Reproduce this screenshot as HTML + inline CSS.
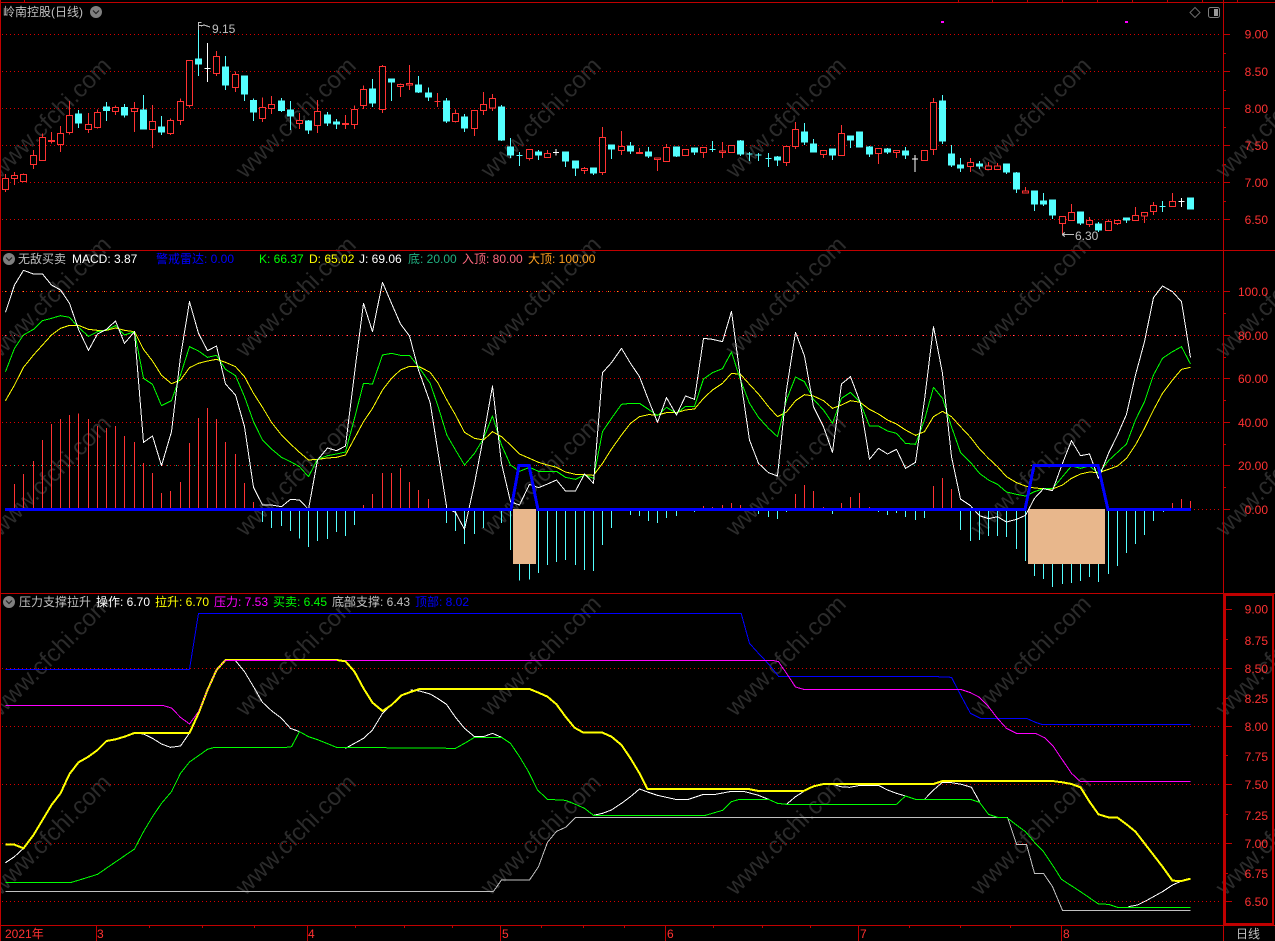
<!DOCTYPE html>
<html><head><meta charset="utf-8"><title>岭南控股</title>
<style>
html,body{margin:0;padding:0;background:#000;width:1275px;height:941px;overflow:hidden}
svg{display:block;position:absolute;left:0;top:0}
text{font-family:"Liberation Sans","Noto Sans CJK SC",sans-serif;font-size:12px;letter-spacing:0}
.wm text{font-size:24px;fill:#2b2b2b;text-anchor:middle;dominant-baseline:central;letter-spacing:0}
.ax text{fill:#ff3232;text-anchor:end}
.c{shape-rendering:crispEdges;fill:none}
.w{stroke-width:3}
</style></head><body>
<svg width="1275" height="941" viewBox="0 0 1275 941" xmlns="http://www.w3.org/2000/svg">
<rect width="1275" height="941" fill="#000"/>
<g class="wm">
<text transform="translate(51,118) rotate(-45)">www.cfchi.com</text><text transform="translate(296,118) rotate(-45)">www.cfchi.com</text><text transform="translate(541,118) rotate(-45)">www.cfchi.com</text><text transform="translate(786,118) rotate(-45)">www.cfchi.com</text><text transform="translate(1031,118) rotate(-45)">www.cfchi.com</text><text transform="translate(1276,118) rotate(-45)">www.cfchi.com</text>
<text transform="translate(51,297) rotate(-45)">www.cfchi.com</text><text transform="translate(296,297) rotate(-45)">www.cfchi.com</text><text transform="translate(541,297) rotate(-45)">www.cfchi.com</text><text transform="translate(786,297) rotate(-45)">www.cfchi.com</text><text transform="translate(1031,297) rotate(-45)">www.cfchi.com</text><text transform="translate(1276,297) rotate(-45)">www.cfchi.com</text>
<text transform="translate(51,476) rotate(-45)">www.cfchi.com</text><text transform="translate(296,476) rotate(-45)">www.cfchi.com</text><text transform="translate(541,476) rotate(-45)">www.cfchi.com</text><text transform="translate(786,476) rotate(-45)">www.cfchi.com</text><text transform="translate(1031,476) rotate(-45)">www.cfchi.com</text><text transform="translate(1276,476) rotate(-45)">www.cfchi.com</text>
<text transform="translate(51,656) rotate(-45)">www.cfchi.com</text><text transform="translate(296,656) rotate(-45)">www.cfchi.com</text><text transform="translate(541,656) rotate(-45)">www.cfchi.com</text><text transform="translate(786,656) rotate(-45)">www.cfchi.com</text><text transform="translate(1031,656) rotate(-45)">www.cfchi.com</text><text transform="translate(1276,656) rotate(-45)">www.cfchi.com</text>
<text transform="translate(51,835) rotate(-45)">www.cfchi.com</text><text transform="translate(296,835) rotate(-45)">www.cfchi.com</text><text transform="translate(541,835) rotate(-45)">www.cfchi.com</text><text transform="translate(786,835) rotate(-45)">www.cfchi.com</text><text transform="translate(1031,835) rotate(-45)">www.cfchi.com</text><text transform="translate(1276,835) rotate(-45)">www.cfchi.com</text>
</g>

<!-- grid -->
<g class="c" stroke="#d80000" stroke-dasharray="1 3">
<path d="M2 34.5H1221M2 71.5H1221M2 108.5H1221M2 145.5H1221M2 182.5H1221M2 219.5H1221"/>
<path d="M2 291.5H1221M2 335.5H1221M2 378.5H1221M2 422.5H1221M2 465.5H1221M1190 509.5H1221"/>
<path d="M2 668.5H1221M2 726.5H1221M2 784.5H1221M2 843.5H1221M2 901.5H1221"/>
</g>
<g class="c" stroke-dasharray="1 8">
<path stroke="#ffa020" d="M5 291.5H1190"/>
<path stroke="#ff6a80" d="M5 335.5H1190"/>
<path stroke="#20b080" d="M5 465.5H1190"/>
</g>

<!-- frame -->
<g class="c" stroke="#c00000">
<path d="M.5 0V941M0 2.5H1275M0 250.5H1275M0 593.5H1275M0 925.5H1275M1223.5 0V941"/>
<path d="M24.5 0V2M958.5 0V2M992.5 0V2M1027.5 0V2M1062.5 0V2M1097.5 0V2M1132.5 0V2M1167.5 0V2M1202.5 0V2M1237.5 0V2"/>
<path d="M1224 34.5h6M1224 71.5h6M1224 108.5h6M1224 145.5h6M1224 182.5h6M1224 219.5h6M1224 53.5h2M1224 90.5h2M1224 127.5h2M1224 164.5h2M1224 201.5h2"/>
<path d="M1224 291.5h6M1224 335.5h6M1224 378.5h6M1224 422.5h6M1224 465.5h6M1224 509.5h6M1224 313.5h2M1224 357.5h2M1224 400.5h2M1224 444.5h2M1224 487.5h2"/>
<path d="M1226 609.5h6M1226 668.5h6M1226 726.5h6M1226 784.5h6M1226 843.5h6M1226 901.5h6M1226 639.5h2M1226 698.5h2M1226 755.5h2M1226 814.5h2M1226 873.5h2"/>
<rect x="1225" y="595" width="48" height="329" stroke-width="2"/>
<path d="M96.5 925V941M307.5 925V941M500.5 925V941M665.5 925V941M858.5 925V941M1061.5 925V941"/>
<path d="M149.5 925v3M202.5 925v3M254.5 925v3M355.5 925v3M404.5 925v3M452.5 925v3M541.5 925v3M583.5 925v3M624.5 925v3M713.5 925v3M762.5 925v3M810.5 925v3M909.5 925v3M960.5 925v3M1010.5 925v3"/>
</g>

<!-- candles -->
<g class="c w" transform="scale(.33333) translate(.5,0)">
<path stroke="#ff3232" d="M16 522V576M43 516V555M70 520V546M100 450V507M127 400V483M154 396V431M181 378V456M208 303V404M265 339V399M292 328V385M346 316V345M403 306V396M457 315V444M511 355V405M541 295V375M568 181V322M649 153V228M706 214V276M787 292V366M814 288V342M898 339V387M952 300V399M1036 345V387M1063 316V387M1090 256V327M1147 195V339M1201 250V291M1228 195V270"/>
<path stroke="#ff3232" fill="#000" d="M7 536h18V568h-18zM34 527h18V536h-18zM61 523h18V545h-18zM91 467h18V494h-18zM118 412h18V482h-18zM145 421h18V424h-18zM172 401h18V433h-18zM199 346h18V397h-18zM256 373h18V389h-18zM283 337h18V383h-18zM337 322h18V334h-18zM394 325h18V334h-18zM448 364h18V388h-18zM502 361h18V401h-18zM532 304h18V361h-18zM559 181h18V317h-18zM640 169h18V220h-18zM697 223h18V263h-18zM778 322h18V356h-18zM805 313h18V326h-18zM889 361h18V371h-18zM943 334h18V377h-18zM1027 370h18V373h-18zM1054 328h18V374h-18zM1081 268h18V317h-18zM1138 199h18V328h-18zM1192 253h18V260h-18zM1219 250h18V255h-18z"/>
<path stroke="#54ffff" d="M235 330V384M319 306V363M373 312V353M430 285V387M484 348V405M595 75V228M676 168V270M733 226V303M760 295V363M844 294V336M871 303V390M925 360V402M982 336V378M1009 357V387M1117 237V321M1174 237V303M1255 228V279M1285 262V303"/>
<path stroke="#54ffff" fill="#54ffff" d="M226 342h18V369h-18zM310 321h18V332h-18zM364 322h18V345h-18zM421 330h18V387h-18zM475 381h18V396h-18zM586 177h18V192h-18zM667 201h18V255h-18zM724 228h18V282h-18zM751 301h18V336h-18zM835 303h18V331h-18zM862 330h18V348h-18zM916 363h18V390h-18zM973 345h18V369h-18zM1000 366h18V372h-18zM1108 267h18V309h-18zM1165 237h18V246h-18zM1246 255h18V276h-18zM1276 279h18V291h-18z"/>
<path stroke="#fff" d="M622 129V246M613 205h18"/>
</g>
<g class="c w" transform="translate(430,50) scale(.33333) translate(.5,0)">
<path stroke="#ff3232" d="M22 129V171M76 178V218M133 181V258M160 126V195M187 132V183M298 298V332M352 300V324M463 351V372M517 231V375M574 243V315M628 294V312M682 324V363M709 282V335M820 291V324M877 276V324M1069 288V348M1096 216V297M1180 301V324M1234 225V317"/>
<path stroke="#ff3232" fill="#000" d="M13 154h18M67 190h18V215h-18zM124 181h18V236h-18zM151 163h18V182h-18zM178 145h18V174h-18zM289 298h18V326h-18zM343 310h18V323h-18zM454 355h18V362h-18zM508 262h18V368h-18zM565 289h18V302h-18zM619 307h18V311h-18zM673 324h18V329h-18zM700 292h18V335h-18zM757 298h18V317h-18zM811 292h18V308h-18zM868 303h18V308h-18zM895 286h18V308h-18zM1060 289h18V338h-18zM1087 238h18V290h-18zM1171 301h18V314h-18zM1225 250h18V317h-18z"/>
<path stroke="#54ffff" d="M49 144V219M103 192V246M214 165V273M241 264V324M268 306V348M325 300V330M406 306V351M436 333V378M490 354V375M544 285V327M601 276V312M655 291V324M739 291V321M793 294V315M847 273V306M931 270V318M958 306V333M985 309V333M1015 309V351M1042 318V348M1123 219V285M1150 267V306M1207 297V330M1261 258V294"/>
<path stroke="#54ffff" fill="#54ffff" d="M40 153h18V213h-18zM94 201h18V234h-18zM205 171h18V270h-18zM232 291h18V315h-18zM259 316h18M316 306h18V315h-18zM397 306h18V333h-18zM427 333h18V354h-18zM481 354h18V369h-18zM535 285h18V297h-18zM592 288h18V303h-18zM646 306h18V318h-18zM730 291h18V318h-18zM784 294h18V306h-18zM838 298h18M922 273h18V312h-18zM949 312h18M976 315h18M1006 325h18M1033 321h18V330h-18zM1114 246h18V276h-18zM1141 282h18V306h-18zM1198 297h18V315h-18zM1252 258h18V270h-18zM1279 246h18V291h-18z"/>
<path stroke="#fff" d="M378 297V316M369 308h18"/>
</g>
<g class="c w" transform="translate(860,0) scale(.33333) translate(.5,0)">
<path stroke="#ff3232" d="M55 445V492M109 451V474M220 294V465M331 474V516M385 486V510M412 489V510M496 561V579M607 650V706M634 612V663M688 651V681M745 658V692M772 660V675M826 621V663M853 636V669M880 606V645M937 579V621"/>
<path stroke="#ff3232" fill="#000" d="M46 445h18V461h-18zM100 451h18V458h-18zM184 451h18V482h-18zM211 307h18V449h-18zM322 488h18V500h-18zM376 498h18V509h-18zM403 498h18V509h-18zM487 573h18V579h-18zM598 650h18V670h-18zM625 637h18V662h-18zM679 661h18V674h-18zM736 665h18V692h-18zM763 661h18V670h-18zM817 647h18V662h-18zM844 638h18V648h-18zM871 616h18V635h-18zM928 604h18V620h-18z"/>
<path stroke="#54ffff" d="M28 438V471M82 444V462M136 441V477M247 285V432M274 435V501M301 474V516M358 483V507M439 492V522M469 516V579M523 573V633M550 579V618M577 600V657M661 636V675M715 666V696M799 654V669M907 603V636"/>
<path stroke="#54ffff" fill="#54ffff" d="M19 441h18V462h-18zM73 447h18V456h-18zM127 453h18V465h-18zM238 303h18V423h-18zM265 462h18V495h-18zM292 495h18V504h-18zM349 492h18V498h-18zM430 492h18V516h-18zM460 519h18V567h-18zM514 573h18V612h-18zM541 603h18V612h-18zM568 600h18V645h-18zM652 636h18V669h-18zM706 672h18V690h-18zM790 654h18V660h-18zM898 619h18M982 594h18V627h-18z"/>
<path stroke="#fff" d="M165 465V516M156 477h18M964 594V621M955 604h18"/>
</g>
<g class="c"><rect x="941" y="21" width="3" height="2" fill="#ff00ff"/><rect x="1125" y="21" width="3" height="2" fill="#ff00ff"/></g>

<!-- annotations -->
<g class="c" stroke="#c0c0c0">
<path d="M198.5 22V30M198.5 22.5h3M198.5 25.5h3M201 26l3-1 3 1 3 1"/>
<path d="M1062 234.5H1074M1062 234.5l3-2M1062 234.5l3 2"/>
</g>
<text x="212" y="33" fill="#c0c0c0">9.15</text>
<text x="1075" y="240" fill="#c0c0c0">6.30</text>

<!-- panel 2: MACD bars -->
<g class="c w" transform="translate(0,250) scale(.33333) translate(.5,0)">
<path stroke="#ff3232" d="M43 775V702M70 775V672M100 775V633M127 775V570M154 775V522M181 775V507M208 775V495M235 775V491M265 775V507M292 775V528M319 775V534M346 775V528M373 775V558M403 775V576M430 775V639M457 775V669M484 775V729M511 775V723M541 775V696M568 775V579M595 775V504M622 775V474M649 775V507M676 775V576M706 775V612M733 775V699M760 775V756M1090 775V765M1117 775V732M1147 775V669M1174 775V669M1201 775V654M1228 775V696M1255 775V720M1285 775V747"/>
<path stroke="#54ffff" d="M787 780V816M814 780V834M844 780V828M871 780V843M898 780V866M925 780V891M952 780V873M982 780V867M1009 780V846M1036 780V858M1063 780V825"/>
</g>
<g class="c w" transform="translate(430,250) scale(.33333) translate(.5,0)">
<path stroke="#54ffff" d="M49 780V819M76 780V843M103 780V882M133 780V852M160 780V834M214 780V819M241 780V900M268 780V992M298 780V989M325 780V969M352 780V945M379 780V936M406 780V930M436 780V945M463 780V960M490 780V963M517 780V885M544 780V834M601 780V795M628 780V798M655 780V813M682 780V819M709 780V804M739 780V798M793 780V786M985 780V792M1015 780V801M1042 780V807M1069 780V786M1207 780V792"/>
<path stroke="#ff3232" d="M820 775V768M847 775V771M877 775V765M904 775V759M931 775V765M1096 775V732M1123 775V705M1150 775V723M1180 775V771M1234 775V759M1261 775V741M1288 775V729"/>
</g>
<g class="c w" transform="translate(860,250) scale(.33333) translate(.5,0)">
<path stroke="#ff3232" d="M28 775V771M220 775V708M247 775V684M274 775V717M937 775V759M964 775V747M991 775V753"/>
<path stroke="#54ffff" d="M55 780V786M82 780V795M109 780V789M136 780V801M166 780V810M193 780V804M301 780V840M331 780V873M358 780V870M385 780V858M412 780V858M439 780V861M469 780V897M496 780V933M523 780V978M550 780V987M577 780V1011M607 780V1002M634 780V999M661 780V993M688 780V981M715 780V996M745 780V972M772 780V948M799 780V909M826 780V882M853 780V855M880 780V813M910 780V786"/>
</g>
<g class="c">
<rect x="513" y="509" width="23" height="55" fill="#e8b78c"/>
<rect x="1028" y="509" width="77" height="55" fill="#e8b78c"/>
</g>

<!-- panel 2: KDJ -->
<g class="c w" transform="translate(0,250) scale(.33333) translate(.5,0)" stroke-linejoin="round">
<polyline stroke="#ffff00" points="16,452 43,405 70,352 100,315 127,285 154,255 181,235 208,226 235,226 265,238 292,241 319,241 346,234 373,241 403,245 430,298 457,333 484,376 514,401 541,390 568,353 595,340 622,333 649,328 676,337 706,350 733,380 760,430 787,472 814,517 844,555 871,582 898,607 925,630 952,628 982,624 1009,622 1036,615 1063,565 1090,515 1117,475 1147,420 1174,385 1201,360 1228,349 1255,349 1290,367 1314,400 1340,450 1366,495 1393,547 1423,565 1450,570 1477,545 1504,560 1531,585 1558,612 1588,625 1615,637 1642,645 1669,652 1696,666 1726,673 1753,674 1780,676 1807,640 1834,597 1864,555 1891,520 1918,500 1945,494 1972,495 1999,488 2029,488 2056,480 2083,477 2110,445 2137,420 2167,400 2194,370 2221,373 2248,403 2275,432 2305,470 2332,500 2359,486 2386,452 2413,434 2440,438 2470,452 2497,475 2524,465 2551,452 2580,457 2608,478 2635,492 2662,510 2689,522 2716,540 2746,556 2773,545 2800,500 2827,484 2854,500 2881,530 2911,562 2938,597 2965,625 2992,650 3019,680 3049,698 3076,708 3103,714 3130,716 3157,717 3187,705 3214,685 3241,672 3268,666 3295,668 3325,658 3352,648 3379,625 3406,585 3433,535 3460,480 3487,430 3517,390 3544,358 3571,352"/>
<polyline stroke="#00ff00" points="16,365 43,295 70,255 100,238 127,212 154,205 181,197 208,202 235,232 265,259 292,245 319,240 346,227 373,255 403,245 430,385 457,403 484,467 514,452 541,375 568,290 595,303 622,322 649,316 676,358 706,377 733,440 760,515 787,570 814,597 844,622 871,635 898,650 925,680 952,628 982,617 1009,612 1036,606 1063,505 1090,400 1117,402 1147,315 1174,310 1201,316 1228,316 1255,350 1290,400 1314,470 1340,555 1366,600 1393,645 1423,610 1450,565 1477,498 1504,585 1531,645 1558,664 1588,652 1615,664 1642,664 1669,664 1696,682 1726,688 1753,675 1780,685 1807,545 1834,505 1864,463 1891,460 1918,460 1945,478 1972,497 1999,472 2029,490 2056,469 2083,469 2110,387 2137,368 2167,356 2194,306 2221,390 2248,460 2275,502 2305,535 2332,560 2359,450 2386,381 2413,395 2440,448 2470,480 2497,520 2524,445 2551,427 2580,457 2608,528 2635,528 2662,543 2689,550 2716,580 2746,583 2773,510 2800,412 2827,445 2854,530 2881,607 2911,637 2938,670 2965,690 2992,703 3019,726 3049,733 3076,738 3103,725 3130,716 3157,716 3187,680 3214,648 3241,655 3268,648 3295,670 3325,632 3352,607 3379,582 3406,510 3433,455 3460,375 3487,325 3517,305 3544,290 3571,342"/>
<polyline stroke="#ffffff" points="16,187 43,105 70,61 100,72 127,72 154,105 181,120 208,160 235,238 265,301 292,252 319,238 346,213 373,280 403,245 430,577 457,558 484,647 514,545 541,320 568,155 595,250 622,302 649,288 676,402 706,435 733,530 760,712 787,765 814,765 844,770 871,748 898,750 925,778 952,630 982,594 1009,602 1036,588 1063,370 1090,160 1117,245 1147,97 1174,160 1201,222 1228,258 1255,360 1290,458 1340,775 1366,787 1393,838 1423,700 1450,560 1477,408 1504,640 1531,755 1558,765 1588,703 1615,713 1642,702 1669,690 1696,723 1726,723 1753,672 1780,700 1807,368 1834,338 1864,295 1891,340 1918,380 1945,450 1972,517 1999,443 2029,495 2056,438 2083,448 2110,265 2137,268 2167,275 2194,184 2221,385 2248,570 2275,640 2305,668 2332,678 2359,420 2386,247 2413,318 2440,470 2470,530 2497,607 2524,402 2551,380 2580,457 2608,628 2635,595 2662,612 2689,598 2716,655 2746,637 2773,450 2800,230 2827,370 2854,620 2881,747 2911,767 2938,797 2965,806 2992,800 3019,816 3049,808 3076,796 3103,745 3130,716 3157,722 3187,640 3214,572 3241,617 3268,612 3295,685 3325,610 3352,555 3379,493 3406,375 3433,275 3460,143 3487,108 3517,125 3544,155 3571,322"/>
</g>
<path class="c" stroke="#0000ff" stroke-width="3" d="M5 509.5H511L519 465.5H529L538 509.5H1025L1034 465.5H1098L1108 509.5H1191"/>

<!-- panel 3 -->
<g class="c w" transform="translate(0,590) scale(.33333) translate(.5,0)" stroke-linejoin="round">
<polyline stroke="#c0c0c0" points="16,904 190,904 1480,904 1504,870 1588,870 1615,830 1642,757 1669,724 1696,712 1726,682 3022,682 3049,763 3079,763 3103,850 3130,850 3157,890 3187,961 3571,961"/>
<polyline stroke="#0000ff" points="16,238 568,238 595,70 2223,70 2248,160 2275,190 2308,225 2335,259 2788,259 2854,262 2884,320 2911,370 2941,385 3079,385 3106,397 3127,404 3571,404"/>
<polyline stroke="#ff00ff" points="16,346 487,346 514,354 541,382 568,402 595,365 622,300 649,240 676,211.5 2320,211.5 2335,215 2359,250 2386,291 2410,298 2881,298 2911,308 2938,322 2965,350 2992,385 3019,415 3049,430 3106,430 3133,443 3160,470 3187,510 3214,550 3241,575 3571,575"/>
<polyline stroke="#ffffff" points="16,818 43,800 70,775"/>
<polyline stroke="#ffffff" points="403,429 430,432 457,445 484,462 511,472 541,468 568,429"/>
<polyline stroke="#ffffff" points="676,210 706,212 733,245 760,290 787,337 814,362 844,385 871,415 898,425"/>
<polyline stroke="#ffffff" points="1036,475 1063,460 1090,445 1117,420 1147,370 1174,345"/>
<polyline stroke="#ffffff" points="1231,300 1258,303 1290,312 1312,325 1339,343 1366,382 1393,415 1423,440 1450,440 1477,430 1504,442"/>
<polyline stroke="#ffffff" points="1780,676 1807,670 1834,660 1864,640 1891,620 1918,597 1945,607 1972,616 2026,628 2065,628 2110,613 2146,613 2194,604 2230,604 2275,616 2305,628 2332,640"/>
<polyline stroke="#ffffff" points="2359,643 2386,620 2410,605"/>
<polyline stroke="#ffffff" points="2470,582 2497,582 2521,590 2548,592 2575,587 2635,586 2662,600 2689,610 2716,618"/>
<polyline stroke="#ffffff" points="2773,628 2800,600 2827,577 2854,578 2884,583 2914,592 2938,635"/>
<polyline stroke="#ffffff" points="3385,950 3412,945 3442,930 3487,905 3517,885 3544,873"/>
<polyline stroke="#00ff00" points="16,877 214,877 244,868 292,853 340,820 403,777 430,725 457,680 484,640 514,605 541,550 568,516 622,478 643,472 859,472 874,470 898,425 925,440 955,450 1009,472 1366,475 1393,460 1423,442 1504,442 1531,460 1558,500 1585,545 1612,600 1642,628 1696,631 1726,643 1753,655 1780,676 2116,676 2167,661 2194,635 2218,628 2305,628 2332,640 2359,643 2689,643 2716,618 2746,628 2911,628 2938,637 2965,673 2992,682 3019,682 3049,705 3076,725 3103,757 3130,785 3157,825 3184,868 3241,905 3295,942 3325,943 3352,952 3571,952"/>
<polyline stroke="#ffff00" stroke-width="6" points="16,764 43,764 70,775 100,735 127,690 154,645 181,610 208,552 235,517 265,500 292,480 319,453 346,448 373,440 403,429 568,429 595,370 622,300 649,240 676,210 1010,210 1036,214 1063,245 1090,295 1117,338 1147,363 1174,345 1204,316 1231,306 1258,297 1588,297 1615,308 1642,320 1669,343 1696,380 1723,413 1750,428 1807,428 1834,440 1864,465 1891,505 1918,550 1942,597 2245,597 2275,603 2410,603 2440,589 2470,582 2800,582 2827,573 3157,573 3187,577 3214,582 3241,592 3268,635 3295,673 3325,682 3352,683 3379,703 3406,725 3433,760 3460,795 3487,830 3517,872 3544,873 3571,866"/>
<polyline stroke="#ff00ff" stroke-dasharray="3 6" points="595,365 622,300 649,240 676,211"/>
<polyline stroke="#ff00ff" points="676,211.5 1010,211.5"/>
</g>

<!-- titles panel 1 -->
<text x="3" y="16" fill="#c0c0c0">岭南控股(日线)</text>
<circle cx="96" cy="12" r="6" fill="#7f7f7f"/><path d="M93 10.5l3 3 3-3" fill="none" stroke="#222" stroke-width="1.2"/>
<path d="M1195 7.5l5 5-5 5-5-5z" fill="none" stroke="#6a6a6a"/>
<rect x="1208.5" y="7.5" width="11" height="10" rx="2" fill="none" stroke="#7f7f7f"/><rect x="1214" y="9" width="4" height="7" fill="#9a9a9a"/>

<!-- titles panel 2 -->
<circle cx="9" cy="259" r="6" fill="#7f7f7f"/><path d="M6 257.5l3 3 3-3" fill="none" stroke="#222" stroke-width="1.2"/>
<text x="18" y="263" fill="#c0c0c0">无敌买卖</text>
<text x="72" y="263" fill="#fff">MACD: 3.87</text>
<text x="156" y="263" fill="#0000ff">警戒雷达: 0.00</text>
<text x="259" y="263" fill="#00ff00">K: 66.37</text>
<text x="309" y="263" fill="#ffff00">D: 65.02</text>
<text x="359" y="263" fill="#fff">J: 69.06</text>
<text x="408" y="263" fill="#20b080">底: 20.00</text>
<text x="462" y="263" fill="#ff6a80">入顶: 80.00</text>
<text x="528" y="263" fill="#ffa020">大顶: 100.00</text>

<!-- titles panel 3 -->
<circle cx="9" cy="602" r="6" fill="#7f7f7f"/><path d="M6 600.5l3 3 3-3" fill="none" stroke="#222" stroke-width="1.2"/>
<text x="19" y="606" fill="#c0c0c0">压力支撑拉升</text>
<text x="96" y="606" fill="#fff">操作: 6.70</text>
<text x="155" y="606" fill="#ffff00">拉升: 6.70</text>
<text x="214" y="606" fill="#ff00ff">压力: 7.53</text>
<text x="273" y="606" fill="#00ff00">买卖: 6.45</text>
<text x="332" y="606" fill="#c0c0c0">底部支撑: 6.43</text>
<text x="415" y="606" fill="#0000ff">顶部: 8.02</text>

<!-- axis -->
<g class="ax">
<text x="1268" y="38.5">9.00</text><text x="1268" y="76">8.50</text><text x="1268" y="113">8.00</text><text x="1268" y="150">7.50</text><text x="1268" y="187">7.00</text><text x="1268" y="224">6.50</text>
<text x="1268" y="296">100.0</text><text x="1268" y="340">80.00</text><text x="1268" y="383">60.00</text><text x="1268" y="427">40.00</text><text x="1268" y="470">20.00</text><text x="1268" y="514">0.00</text>
<text x="1268" y="613.5">9.00</text><text x="1268" y="645">8.75</text><text x="1268" y="673">8.50</text><text x="1268" y="703">8.25</text><text x="1268" y="731">8.00</text><text x="1268" y="761">7.75</text><text x="1268" y="789">7.50</text><text x="1268" y="820">7.25</text><text x="1268" y="848">7.00</text><text x="1268" y="878">6.75</text><text x="1268" y="906">6.50</text>
</g>
<g fill="#ff3232">
<text x="5" y="938" letter-spacing=".4">2021年</text>
<text x="97" y="938">3</text><text x="308" y="938">4</text><text x="502" y="938">5</text><text x="667" y="938">6</text><text x="860" y="938">7</text><text x="1063" y="938">8</text>
</g>
<text x="1236" y="938" fill="#c0c0c0">日线</text>
</svg>
</body></html>
